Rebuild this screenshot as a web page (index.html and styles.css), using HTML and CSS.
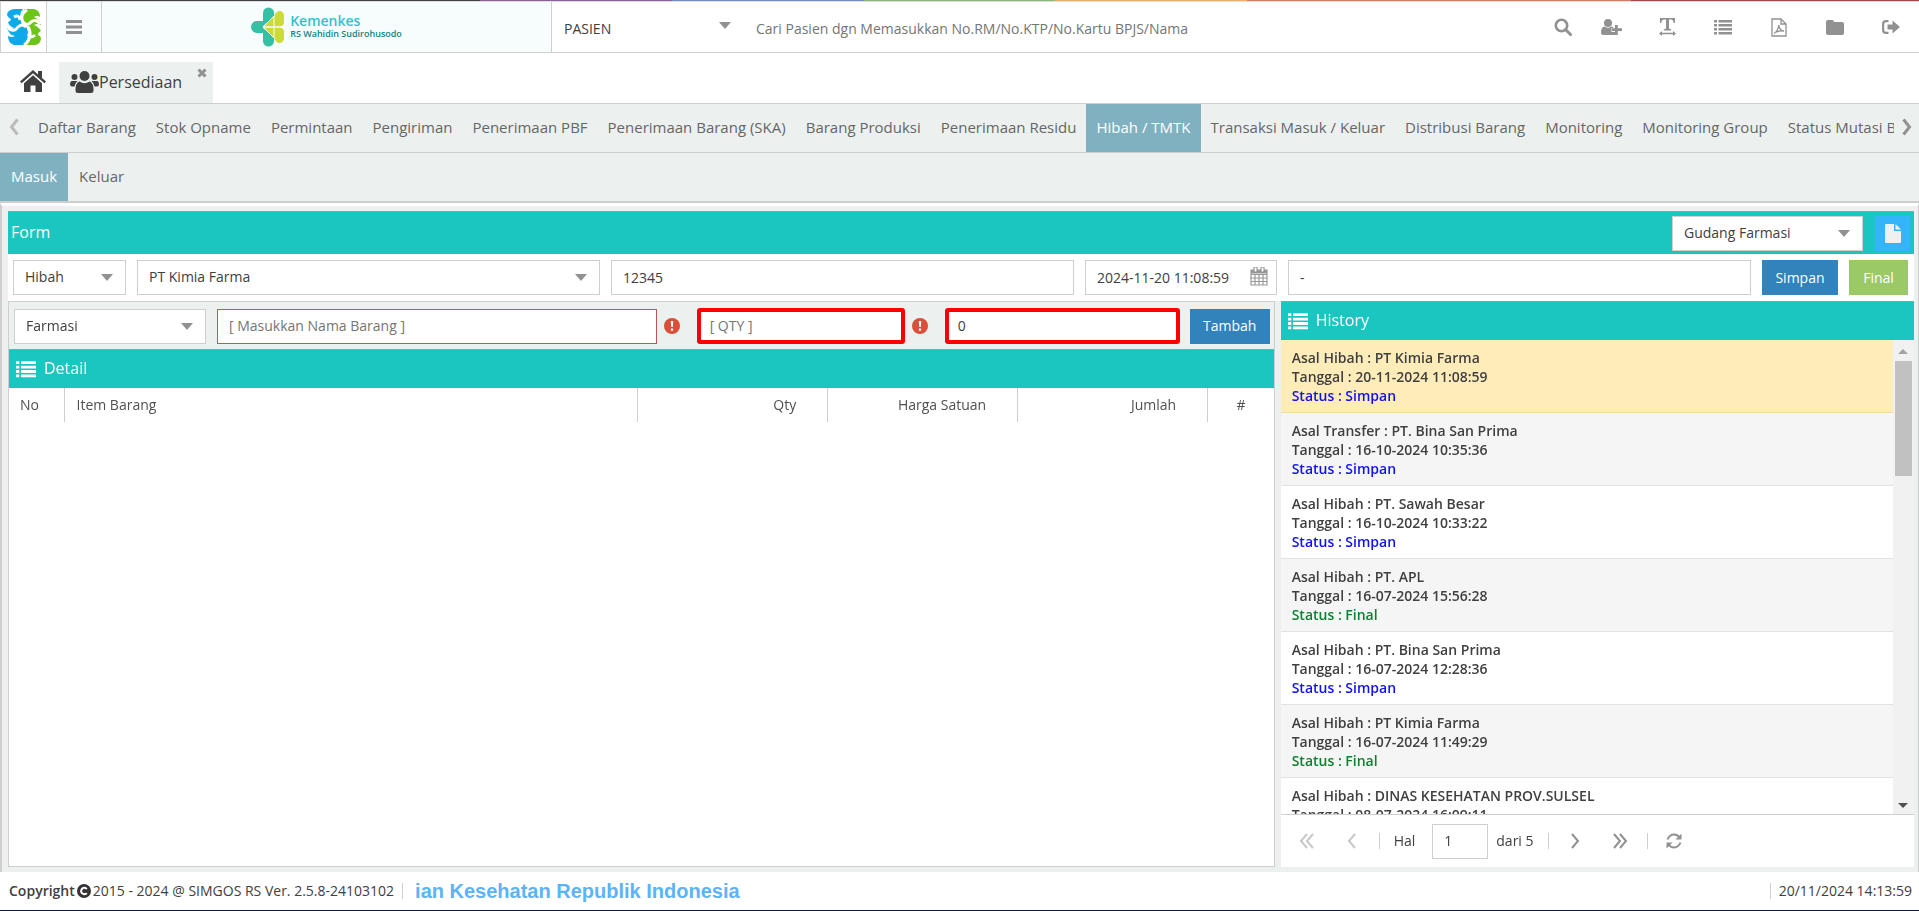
FILE: index.html
```html
<!DOCTYPE html>
<html lang="id">
<head>
    <meta charset="UTF-8">
    <meta name="viewport" content="width=device-width, initial-scale=1.0">
    <title>SIMGOS RS - Persediaan</title>
    <link rel="stylesheet" href="styles.css">
</head>
<body>
    <svg width="0" height="0" class="sprite" aria-hidden="true">
        <symbol id="i-list" viewBox="0 0 18 16">
            <path d="M0 1h3v2.500H0zM0 5h3v2.500H0zM0 9h3v2.500H0zM0 13h3v2.500H0zM4.500 1H18v2.500H4.500zM4.500 5H18v2.500H4.500zM4.500 9H18v2.500H4.500zM4.500 13H18v2.500H4.500z"/>
        </symbol>
        <symbol id="i-error" viewBox="0 0 16 16">
            <circle cx="8" cy="8" r="8" fill="#d9503a"/>
            <path d="M6.800 3h2.400l-.4 6H7.200zM6.900 10.500h2.200v2.200H6.900z" fill="#fff"/>
        </symbol>
    </svg>

    <div class="strip"></div>
    <header class="topbar">
        <a href="#" class="app-logo" aria-label="SIMGOS">
            <svg width="34" height="38" viewBox="0 0 34 38">
                <path d="M7 1h9q-3 3-3 7 0 4 4 8t4 10q0 6-4 11H7Q1 35 1 28q4 2 7 0-6-1-8-8 4 2 7 0-5-2-6-6 3-1 3-3Q0 9 0 6q1-4 7-5z" fill="#0ea9e8"/>
                <path d="M18 1h9q6 1 6 8-3-2-6 0 5 2 7 8-4-2-7 0 5 2 7 6-3 1-3 4 3 1 3 4-1 6-7 6H18q4-4 4-10t-5-10-3-8q0-5 4-8z" fill="#6cc518"/>
                <path d="M20 2q-8 5-4 12 8 6 7 13-1 7-6 10M1 20q6 5 10-1 4-4 8 0M15 14q5 5 9 0 5-4 9 2M7 9q5-3 6 3M21 26q3 5 7 1" fill="none" stroke="#fff" stroke-width="3"/>
            </svg>
        </a>
        <button class="menu-btn" aria-label="Menu">
            <svg width="16" height="14" viewBox="0 0 16 14"><path d="M0 0h16v3H0zM0 5.500h16v3H0zM0 11h16v3H0z"/></svg>
        </button>
        <div class="brand">
            <svg width="34" height="40" viewBox="0 0 34 40">
                <path d="M12 17V6a5.500 5.500 0 0 1 11 0v4L12 19zM12 23v11a5.500 5.500 0 0 0 11 0v-4L12 21zM12 14H6a6 6 0 0 0 0 12h6z" fill="#35c0a4"/>
                <path d="M13 19.500 24 8a4.500 4.500 0 0 1 9 1v6q0 4-4 4.500zM13 20.500 24 32a4.500 4.500 0 0 0 9-1v-6q0-4-4-4.500z" fill="#ccdb37"/>
                <path d="M12 20h21M23 9v22M12 20l11-11M12 20l11 11" fill="none" stroke="#f8fcfc" stroke-width="1"/>
            </svg>
            <div class="brand-text">
                <span class="brand-name">Kemenkes</span>
                <span class="brand-unit">RS Wahidin Sudirohusodo</span>
            </div>
        </div>
        <div class="search">
            <div class="select search-type">
                <select aria-label="Jenis pencarian"><option>PASIEN</option></select>
            </div>
            <input type="text" class="search-input" aria-label="Cari pasien" placeholder="Cari Pasien dgn Memasukkan No.RM/No.KTP/No.Kartu BPJS/Nama">
        </div>
        <nav class="tools">
            <button class="tool-search" aria-label="Cari">
                <svg width="18" height="18" viewBox="0 0 18 18"><circle cx="7.500" cy="7.500" r="5.700" fill="none" stroke="currentColor" stroke-width="2.600"/><path d="m11.500 11.500 5 5" stroke="currentColor" stroke-width="3" stroke-linecap="round"/></svg>
            </button>
            <button aria-label="Pasien baru">
                <svg width="21" height="16" viewBox="0 0 21 16"><circle cx="7" cy="4" r="4"/><path d="M3.500 7.500Q7 10 10.500 7.500q1.500 0 2 1.500h-2v4h3.500v2.500q-1 .5-2 .5H2q-2 0-2-2.500 0-5.500 3.500-6zM14 6h2.800v3.200H21V12h-4.200v4H14v-4h-3V9.200h3z"/></svg>
            </button>
            <button aria-label="Teks">
                <svg width="17" height="18" viewBox="0 0 17 18"><path d="M1 0h15v5h-1.200q-.5-3-2.300-3.400H10V10q0 1.200 2.200 1.300v1.200H4.800v-1.200Q7 11.200 7 10V1.600H4.500Q2.600 2 2.200 5H1zM0 15.500 3 13v1.800h11V13l3 2.500-3 2.500v-1.800H3V18z"/></svg>
            </button>
            <button aria-label="Daftar">
                <svg width="18" height="16"><use href="#i-list"/></svg>
            </button>
            <button aria-label="PDF">
                <svg class="outline" width="16" height="19" viewBox="0 0 16 19"><path d="M1 1h9l5 5v12H1zM10 1v5h5"/><path d="M3 15.500q4-2.500 4.700-8.500.5 5.500 5.300 6-5-.5-8.500 1.200"/></svg>
            </button>
            <button aria-label="Berkas">
                <svg width="18" height="15" viewBox="0 0 18 15"><path d="M0 2q0-2 2-2h4q2 0 2 2h8q2 0 2 2v9q0 2-2 2H2q-2 0-2-2z"/></svg>
            </button>
            <button aria-label="Keluar">
                <svg width="18" height="14" viewBox="0 0 18 14"><path d="M6.500 0v2.200H4q-1.800 0-1.800 1.800v6q0 1.800 1.800 1.800h2.500V14H4q-4 0-4-4V4q0-4 4-4zM5.500 4.500h5V.5L18 7l-7.500 6.500v-4h-5z"/></svg>
            </button>
        </nav>
    </header>

    <nav class="pages">
        <a href="#" class="home" aria-label="Beranda">
            <svg width="26" height="22" viewBox="0 0 26 22"><path d="M13 0 18 4.400V1h4v7l4 3.600-1.600 1.700L13 3.200 1.600 13.300 0 11.600z"/><path d="m13 5.200 9 8V22h-6.500v-6.500h-5V22H4v-8.800z"/></svg>
        </a>
        <div class="page-tab">
            <svg width="29" height="22" viewBox="0 0 29 22"><circle cx="14.500" cy="5" r="5"/><circle cx="4.500" cy="6" r="3"/><circle cx="24.500" cy="6" r="3"/><path d="M9.500 10.500q5 3.500 10 0 4 1.500 4 7.500v1.500q0 2.500-2.500 2.500H8q-2.500 0-2.500-2.500V18q0-6 4-7.500zM1.500 10h6q-2.500 2-3 5.500H2q-2 0-2-2.500 0-2 1.500-3zM27.500 10h-6q2.500 2 3 5.500H27q2 0 2-2.500 0-2-1.500-3z"/></svg>
            <a href="#">Persediaan</a>
            <button class="close" aria-label="Tutup">
                <svg width="10" height="10" viewBox="0 0 10 10"><path d="m1.500 1.500 7 7m0-7-7 7" stroke="currentColor" stroke-width="3"/></svg>
            </button>
        </div>
    </nav>

    <nav class="tabs">
        <button class="scroll off" aria-label="Sebelumnya"><svg width="10" height="18" viewBox="0 0 10 18"><path d="M8.500 1.500 2.500 9l6 7.500" fill="none" stroke="currentColor" stroke-width="3"/></svg></button>
        <div class="tab-list">
            <a href="#">Daftar Barang</a>
            <a href="#">Stok Opname</a>
            <a href="#">Permintaan</a>
            <a href="#">Pengiriman</a>
            <a href="#">Penerimaan PBF</a>
            <a href="#">Penerimaan Barang (SKA)</a>
            <a href="#">Barang Produksi</a>
            <a href="#">Penerimaan Residu</a>
            <a href="#" class="active">Hibah / TMTK</a>
            <a href="#">Transaksi Masuk / Keluar</a>
            <a href="#">Distribusi Barang</a>
            <a href="#">Monitoring</a>
            <a href="#">Monitoring Group</a>
            <a href="#">Status Mutasi Barang</a>
        </div>
        <button class="scroll" aria-label="Berikutnya"><svg width="10" height="18" viewBox="0 0 10 18"><path d="m1.500 1.500 6 7.500-6 7.500" fill="none" stroke="currentColor" stroke-width="3"/></svg></button>
    </nav>
    <nav class="tabs subtabs">
        <a href="#" class="active">Masuk</a>
        <a href="#">Keluar</a>
    </nav>

    <main class="content">
        <div class="bar form-head">
            <h2>Form</h2>
            <div class="select gudang">
                <select aria-label="Gudang"><option>Gudang Farmasi</option></select>
            </div>
            <button class="new-btn" aria-label="Baru">
                <svg width="16" height="19" viewBox="0 0 16 19"><path d="M1 0h8v7h7v11q0 1-1 1H1q-1 0-1-1V1q0-1 1-1zM10.500 0 16 5.500h-5.500z"/></svg>
            </button>
        </div>
        <form class="form-row">
            <div class="select">
                <select aria-label="Jenis"><option>Hibah</option></select>
            </div>
            <div class="select">
                <select aria-label="Asal"><option>PT Kimia Farma</option></select>
            </div>
            <input type="text" aria-label="Nomor" value="12345">
            <div class="date">
                <input type="text" aria-label="Tanggal" value="2024-11-20 11:08:59">
                <svg width="18" height="19" viewBox="0 0 18 19"><path d="M1 3h16v15H1zM1 7.500h16M1 11h16M1 14.500h16M5 7v11M9 7v11M13 7v11" fill="none" stroke="#999" stroke-width="1.200"/><path d="M1 3h16v3.500H1z" fill="#999"/><path d="M4 0h3v5H4zM11 0h3v5h-3z" fill="#fff" stroke="#888"/></svg>
            </div>
            <input type="text" aria-label="Keterangan" value="-">
            <button type="button" class="btn">Simpan</button>
            <button type="button" class="btn final">Final</button>
        </form>

        <div class="columns">
            <section class="detail">
                <form class="item-row">
                    <div class="select jenis-barang">
                        <select aria-label="Jenis barang"><option>Farmasi</option></select>
                    </div>
                    <input type="text" class="nama" aria-label="Nama barang" placeholder="[ Masukkan Nama Barang ]" autofocus>
                    <svg class="err" width="16" height="16"><use href="#i-error"/></svg>
                    <input type="text" class="marked qty" aria-label="Qty" placeholder="[ QTY ]">
                    <svg class="err" width="16" height="16"><use href="#i-error"/></svg>
                    <input type="text" class="marked harga" aria-label="Harga" value="0">
                    <button type="button" class="btn add">Tambah</button>
                </form>
                <div class="bar">
                    <svg width="20" height="18"><use href="#i-list"/></svg>
                    <h2>Detail</h2>
                </div>
                <table class="items">
                    <thead>
                        <tr>
                            <th class="c-no">No</th>
                            <th>Item Barang</th>
                            <th class="c-num">Qty</th>
                            <th class="c-num">Harga Satuan</th>
                            <th class="c-num">Jumlah</th>
                            <th class="c-act">#</th>
                        </tr>
                    </thead>
                    <tbody></tbody>
                </table>
            </section>

            <section class="history">
                <div class="bar">
                    <svg width="20" height="18"><use href="#i-list"/></svg>
                    <h2>History</h2>
                </div>
                <div class="history-body">
                    <ul>
                        <li class="selected">Asal Hibah : PT Kimia Farma<br>Tanggal : 20-11-2024 11:08:59<br><span class="simpan">Status : Simpan</span></li>
                        <li>Asal Transfer : PT. Bina San Prima<br>Tanggal : 16-10-2024 10:35:36<br><span class="simpan">Status : Simpan</span></li>
                        <li>Asal Hibah : PT. Sawah Besar<br>Tanggal : 16-10-2024 10:33:22<br><span class="simpan">Status : Simpan</span></li>
                        <li>Asal Hibah : PT. APL<br>Tanggal : 16-07-2024 15:56:28<br><span class="selesai">Status : Final</span></li>
                        <li>Asal Hibah : PT. Bina San Prima<br>Tanggal : 16-07-2024 12:28:36<br><span class="simpan">Status : Simpan</span></li>
                        <li>Asal Hibah : PT Kimia Farma<br>Tanggal : 16-07-2024 11:49:29<br><span class="selesai">Status : Final</span></li>
                        <li>Asal Hibah : DINAS KESEHATAN PROV.SULSEL<br>Tanggal : 08-07-2024 16:09:11</li>
                    </ul>
                    <div class="scrollbar">
                        <span class="arrow up"></span>
                        <span class="thumb"></span>
                        <span class="arrow down"></span>
                    </div>
                </div>
                <div class="paging">
                    <button class="off" aria-label="Halaman pertama"><svg width="16" height="16" viewBox="0 0 16 16"><path d="M8 1 2 8l6 7M14 1 8 8l6 7"/></svg></button>
                    <button class="off" aria-label="Halaman sebelumnya"><svg width="16" height="16" viewBox="0 0 16 16"><path d="m11 1-6 7 6 7"/></svg></button>
                    <span class="sep"></span>
                    <label for="hal">Hal</label>
                    <input type="text" id="hal" value="1">
                    <span class="total">dari 5</span>
                    <span class="sep"></span>
                    <button aria-label="Halaman berikutnya"><svg width="16" height="16" viewBox="0 0 16 16"><path d="m5 1 6 7-6 7"/></svg></button>
                    <button aria-label="Halaman terakhir"><svg width="16" height="16" viewBox="0 0 16 16"><path d="m2 1 6 7-6 7M8 1l6 7-6 7"/></svg></button>
                    <span class="sep"></span>
                    <button class="reload" aria-label="Muat ulang"><svg width="16" height="16" viewBox="0 0 16 16"><path d="M1.500 6.500Q3.500 1.500 8 1.500q3.500 0 5.500 3M14.500 9.500Q12.500 14.500 8 14.500q-3.500 0-5.500-3"/><path d="M15.500.5v6h-6zM.5 15.500v-6h6z" class="fill"/></svg></button>
                </div>
            </section>
        </div>
    </main>

    <footer class="footer">
        <span class="copy"><b>Copyright</b>
            <svg width="14" height="14" viewBox="0 0 14 14"><circle cx="7" cy="7" r="7" fill="#333"/><path d="M9.800 5A3.200 3.200 0 1 0 9.800 9" fill="none" stroke="#fff" stroke-width="2"/></svg>
            2015 - 2024 @ SIMGOS RS Ver. 2.5.8-24103102</span>
        <span class="sep"></span>
        <span class="running">ian Kesehatan Republik Indonesia</span>
        <span class="sep"></span>
        <time>20/11/2024 14:13:59</time>
    </footer>
</body>
</html>
```
FILE: styles.css
```css
* { box-sizing: border-box; }
body {
    margin: 0;
    height: 100vh;
    display: flex;
    flex-direction: column;
    overflow: hidden;
    font-family: "Open Sans", sans-serif;
    font-size: 14px;
    line-height: 20px;
    color: #404040;
    background: #fff;
}
a { color: inherit; text-decoration: none; }
svg { fill: currentColor; flex: none; display: block; }
.sprite { position: absolute; }
h2 { margin: 0; padding-bottom: 2px; font-size: 16px; font-weight: 400; }
button {
    display: flex;
    align-items: center;
    justify-content: center;
    padding: 0;
    border: 0;
    background: none;
    font: inherit;
    color: #919191;
    cursor: pointer;
}
input, select {
    width: 100%;
    height: 35px;
    padding: 0 11px 1px;
    border: 1px solid #cecece;
    border-radius: 0;
    outline: 0;
    background: #fff;
    font: inherit;
    color: #404040;
    appearance: none;
    min-width: 0;
}
input::placeholder { color: #757575; opacity: 1; }
.select { position: relative; }
.select::after {
    content: "";
    position: absolute;
    right: 13px;
    top: 14px;
    border: 6px solid transparent;
    border-top: 7px solid #919191;
    border-bottom: 0;
    pointer-events: none;
}

/* top bar */
.strip {
    flex: none;
    height: 2px;
    background: linear-gradient(90deg, #414045 25%, #8e5f9c 25% 35%, #6f8fc0 35% 45%, #86b878 45% 55%, #e6b273 55% 65%, #cd8066 65% 85%, #a04a4a 85%);
    border-bottom: 1px solid #ddd;
}
.topbar {
    flex: none;
    display: flex;
    height: 51px;
    border-bottom: 1px solid #cecece;
}
.app-logo {
    width: 47px;
    display: flex;
    align-items: center;
    justify-content: center;
    border: solid #d0d0d0;
    border-width: 0 1px;
}
.menu-btn {
    width: 55px;
    background: #f7fcfc;
    border-right: 1px solid #d0d0d0;
}
.brand {
    flex: 0 1 450px;
    display: flex;
    align-items: center;
    justify-content: center;
    gap: 5px;
    background: #f7fdfd;
    border-right: 1px solid #d0d0d0;
}
.brand-text { display: flex; flex-direction: column; }
.brand-name { font-size: 14px; font-weight: 600; line-height: 14px; color: #35c0cf; }
.brand-unit { font-size: 9px; font-weight: 600; line-height: 12px; color: #16808a; }
.search { flex: 1; display: flex; align-items: center; padding: 4px 0 0 1px; }
.search-type { width: 192px; }
.search-type::after { right: 14px; top: 10px; }
.search select, .search input { border: 0; }
.search-input { flex: 1; }
.tools { display: flex; }
.tools button { width: 56px; }
.tools .tool-search { width: 40px; }
.tools .outline { fill: none; stroke: currentColor; stroke-width: 1.3; }

/* page tabs */
.pages {
    flex: none;
    display: flex;
    align-items: flex-end;
    height: 51px;
    border-bottom: 1px solid #cecece;
}
.home { width: 59px; padding: 0 0 11px 20px; }
.page-tab {
    display: flex;
    align-items: center;
    width: 154px;
    height: 41px;
    padding: 0 0 2px 11px;
    background: #ecf1f0;
    font-size: 16px;
}
.close { margin: 0 6px 18px auto; }

.tabs {
    flex: none;
    display: flex;
    height: 49px;
    background: #ecf1f0;
    border-bottom: 1px solid #cecece;
    font-size: 15px;
    color: #666;
}
.tab-list { flex: 1; display: flex; overflow: hidden; }
.tabs a {
    flex: none;
    padding: 13px 10px 15px;
}
.tabs .active { background: #7fb1c0; color: #fff; }
.scroll { width: 28px; padding-bottom: 3px; }
.scroll:last-child { width: 25px; }
.scroll.off { color: #bbb; }
.subtabs { height: 50px; border-bottom-width: 2px; }
.subtabs a { padding: 13px 11px 15px; }

/* content */
.content {
    flex: 1;
    min-height: 0;
    display: flex;
    flex-direction: column;
    padding: 5px 4px 5px 6px;
    background: #ecf1f0;
    border-left: 2px solid #cecece;
    border-top: 3px solid #fff;
    border-right: 1px solid #cecece;
}
.bar {
    flex: none;
    display: flex;
    align-items: center;
    gap: 8px;
    height: 39px;
    padding: 0 7px;
    background: #1bc6c1;
    border-top: 1px solid #4fbdb9;
    color: #fff;
}
.form-head { height: 43px; padding: 0 4px 0 3px; gap: 12px; }
.form-head h2 { flex: 1; }
.gudang { width: 191px; }
.new-btn { width: 35px; height: 35px; background: #35b5f9; color: #f0f0f0; }
.form-row {
    flex: none;
    display: grid;
    grid-template-columns: 113px 1fr 1fr 192px 1fr 76px 59px;
    gap: 11px;
    padding: 6px 6px 6px 5px;
    background: #fff;
}
.date { position: relative; }
.date svg { position: absolute; right: 9px; top: 7px; }
.btn { height: 35px; color: #fff; background: #3282bc; }
.final { background: #9bc966; }

.columns {
    flex: 1;
    min-height: 0;
    display: grid;
    grid-template-columns: 2fr 1fr;
    gap: 6px;
}
.detail {
    display: flex;
    flex-direction: column;
    background: #fff;
    border: 1px solid #cecece;
}
.item-row {
    display: flex;
    align-items: center;
    padding: 6px 4px 5px 5px;
    background: #ecf1f0;
}
.jenis-barang { width: 192px; margin-right: 11px; }
.nama { flex: 1; border-color: #c0584f; }
.err { margin: 0 17px 0 7px; }
.marked { height: 36px; border: 4px solid #f00; border-radius: 3px; padding: 0 9px 1px; }
.qty { width: 208px; }
.harga { width: 235px; }
.add { width: 80px; margin-left: 10px; }
.items {
    width: 100%;
    table-layout: fixed;
    border-collapse: collapse;
}
.items th {
    padding: 7px 31px 7px 12px;
    font-weight: 400;
    text-align: left;
    color: #505050;
    border-left: 1px solid #cecece;
}
.items th:first-child { border-left: 0; }
.items .c-no { width: 55px; padding: 7px 11px; }
.items .c-num { width: 190px; text-align: right; }
.items .c-act { width: 66px; text-align: center; padding: 7px 0; }

/* history */
.history {
    display: flex;
    flex-direction: column;
    min-height: 0;
    background: #fff;
}
.history-body {
    flex: 1;
    min-height: 0;
    display: flex;
    overflow: hidden;
}
.history ul {
    flex: 1;
    margin: 0;
    padding: 0;
    list-style: none;
    font-weight: 600;
    line-height: 19px;
}
.history li {
    height: 73px;
    padding: 8px 11px 7px;
    border-bottom: 1px solid #e2e2e2;
}
.history li:nth-child(even) { background: #f5f5f5; }
.history li.selected { background: #ffedb9; border-color: #f0dc9c; }
.simpan { color: #1010f0; }
.selesai { color: #0e8030; }
.scrollbar {
    display: flex;
    flex-direction: column;
    align-items: center;
    width: 21px;
    padding: 9px 0 6px;
    background: #f1f1f1;
}
.arrow { border: 5px solid transparent; }
.up { border-top: 0; border-bottom-color: #a3a3a3; }
.down { border-bottom: 0; border-top-color: #505050; margin-top: auto; }
.thumb { width: 17px; height: 115px; margin-top: 7px; background: #c1c1c1; }

.paging {
    flex: none;
    display: flex;
    align-items: center;
    height: 53px;
    padding-left: 4px;
    border-top: 1px solid #cecece;
}
.paging button { width: 45px; height: 35px; }
.paging button svg { fill: none; stroke: currentColor; stroke-width: 2; }
.paging svg .fill { fill: currentColor; stroke: none; }
.paging .off { color: #c8c8c8; }
.paging .sep { margin: 0 4px; }
.paging label { margin: 0 17px 0 10px; }
.paging input { width: 56px; }
.total { margin: 0 10px 0 8px; }
.sep { width: 1px; height: 16px; background: #cecece; }

.footer {
    flex: none;
    display: flex;
    align-items: center;
    gap: 8px;
    height: 39px;
    padding: 0 7px 0 9px;
    border-bottom: 1px solid #101850;
}
.copy { display: flex; align-items: center; gap: 2px; }
.copy b { font-weight: 600; }
.running {
    flex: 1;
    padding-left: 4px;
    font: 700 20px/24px "Liberation Sans", sans-serif;
    color: #5cb3f8;
}
```
